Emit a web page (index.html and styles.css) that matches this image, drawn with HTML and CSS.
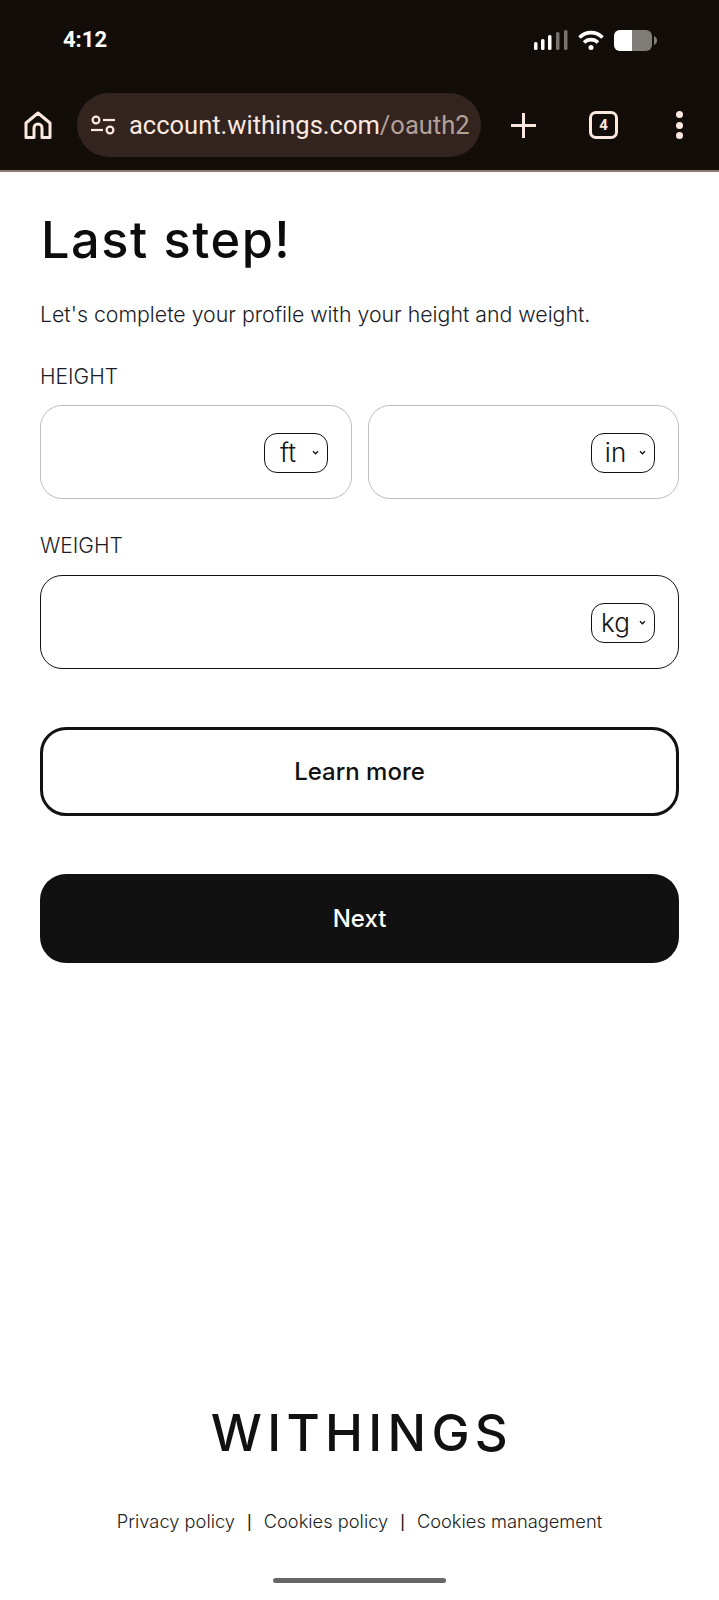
FILE: index.html
```html
<!DOCTYPE html>
<html lang="en">
<head>
  <meta charset="UTF-8" />
  <meta name="viewport" content="width=device-width, initial-scale=1.0"/>
  <title>Last step!</title>
  <link rel="stylesheet" href="styles.css">
</head>
<body>
  <header class="browser">
    <div class="status-bar">
      <span class="clock">4:12</span>
      <div class="status-icons">
        <svg class="signal" width="34" height="20" viewBox="0 0 34 20">
          <rect x="0" y="12" width="3.500" height="8" rx="1.500" fill="#fff"/>
          <rect x="7" y="9" width="3.500" height="11" rx="1.500" fill="#fff"/>
          <rect x="14" y="5" width="3.500" height="15" rx="1.500" fill="#fff"/>
          <rect x="22" y="2" width="3.500" height="18" rx="1.500" fill="#77736f"/>
          <rect x="30" y="0" width="3.500" height="20" rx="1.500" fill="#77736f"/>
        </svg>
        <svg class="wifi" width="26" height="20" viewBox="0 0 26 20" fill="none" stroke="#fff" stroke-width="3.600">
          <path d="M1.500 7.500C8 1 18 1 24.500 7.500"/>
          <path d="M6 12.500C10 8.700 16 8.700 20 12.500"/>
          <circle cx="13" cy="17.500" r="2.500" fill="#fff" stroke="none"/>
        </svg>
        <svg class="battery" width="43" height="22" viewBox="0 0 43 22">
          <rect x="0" y="0" width="38" height="21" rx="6" fill="#807c78"/>
          <path d="M6 0h12v21H6a6 6 0 0 1-6-6V6a6 6 0 0 1 6-6z" fill="#fff"/>
          <path d="M40 6c2 .5 3 2.500 3 4.500s-1 4-3 4.500z" fill="#807c78"/>
        </svg>
      </div>
    </div>

    <div class="toolbar">
      <svg class="home-icon" width="28" height="28" viewBox="0 0 28 28" fill="none" stroke="#fde8df" stroke-width="3" stroke-linejoin="round">
        <path d="M2 12L14 2l12 10v14.500h-8V17a4 4 0 0 0-8 0v9.500H2z"/>
      </svg>
      <div class="url-bar">
        <svg width="24" height="20" viewBox="0 0 24 20" fill="none" stroke="#fde8df" stroke-width="2.200">
          <circle cx="5" cy="5" r="3.400"/>
          <path d="M12 5h12"/>
          <path d="M0 15h12"/>
          <circle cx="19" cy="15" r="3.400"/>
        </svg>
        <span class="url">account.withings.com<span class="url-path">/oauth2</span></span>
      </div>
      <svg class="plus-icon" width="27" height="27" viewBox="0 0 27 27" stroke="#fde8df" stroke-width="3">
        <path d="M13.500 1v25M1 13.500h25"/>
      </svg>
      <div class="tab-count">4</div>
      <div class="menu-dots"><i></i><i></i><i></i></div>
    </div>
  </header>

  <main class="page">
    <h1>Last step!</h1>
    <p class="intro">Let's complete your profile with your height and weight.</p>

    <label class="field-label">HEIGHT</label>
    <div class="field-row">
      <div class="field">
        <div class="unit"><span class="unit-text">ft</span><svg class="chevron" width="7" height="5" viewBox="0 0 8 6"><path d="M1 1.500l3 3 3-3" fill="none" stroke="#111" stroke-width="1.500"/></svg></div>
      </div>
      <div class="field">
        <div class="unit"><span class="unit-text">in</span><svg class="chevron" width="7" height="5" viewBox="0 0 8 6"><path d="M1 1.500l3 3 3-3" fill="none" stroke="#111" stroke-width="1.500"/></svg></div>
      </div>
    </div>

    <label class="field-label weight-label">WEIGHT</label>
    <div class="field-row">
      <div class="field active">
        <div class="unit"><span class="unit-text">kg</span><svg class="chevron" width="7" height="5" viewBox="0 0 8 6"><path d="M1 1.500l3 3 3-3" fill="none" stroke="#111" stroke-width="1.500"/></svg></div>
      </div>
    </div>

    <button class="btn btn-outline">Learn more</button>
    <button class="btn btn-dark">Next</button>
  </main>

  <footer class="footer">
    <div class="logo">WITHINGS</div>
    <nav class="links">
      <a>Privacy policy</a><span class="sep">|</span><a>Cookies policy</a><span class="sep">|</span><a>Cookies management</a>
    </nav>
    <div class="home-bar"></div>
  </footer>
</body>
</html>
```

FILE: styles.css
```css
* {
  box-sizing: border-box;
}

body {
  margin: 0;
  height: 1600px;
  display: flex;
  flex-direction: column;
  background: #fff;
  color: #111;
  font-family: 'Inter', 'Liberation Sans', sans-serif;
  overflow: hidden;
}

/* browser chrome */
.browser {
  height: 172px;
  background: #130d09;
  border-bottom: 2px solid #8a7a70;
}

.status-bar {
  height: 93px;
  display: flex;
  justify-content: space-between;
  padding: 26px 62px 0 63px;
}

.clock {
  color: #fff;
  font-family: 'Roboto', sans-serif;
  font-weight: 700;
  font-size: 22px;
  line-height: 28px;
}

.status-icons {
  display: flex;
  align-items: flex-start;
  gap: 10px;
  padding-top: 4px;
}

.toolbar {
  display: flex;
  align-items: center;
  height: 64px;
  padding-left: 24px;
}

.url-bar {
  width: 404px;
  height: 64px;
  margin-left: 25px;
  padding-left: 14px;
  display: flex;
  align-items: center;
  gap: 14px;
  border-radius: 32px;
  background: #33241f;
}

.url {
  color: #fde8df;
  font-family: 'Roboto', sans-serif;
  font-size: 25.500px;
  white-space: nowrap;
}

.url-path {
  color: #b3a199;
}

.plus-icon {
  margin-left: 29px;
}

.tab-count {
  width: 29px;
  height: 28px;
  margin-left: 52px;
  border: 3px solid #fde8df;
  border-radius: 7px;
  color: #fde8df;
  font-family: 'Roboto', sans-serif;
  font-weight: 700;
  font-size: 15px;
  line-height: 22px;
  text-align: center;
}

.menu-dots {
  display: flex;
  flex-direction: column;
  gap: 3.500px;
  margin-left: 58px;
}

.menu-dots i {
  width: 7px;
  height: 7px;
  border-radius: 50%;
  background: #fde8df;
}

/* form */
.page {
  padding: 0 40px;
}

h1 {
  margin: 40px 0 0 1px;
  font-weight: 500;
  font-size: 50.500px;
  line-height: 56px;
  letter-spacing: 1.500px;
  color: #0c0c0c;
}

.intro {
  margin: 31px 0 0;
  font-weight: 300;
  font-size: 21.300px;
  line-height: 30px;
  color: #1c1c28;
}

.field-label {
  display: block;
  margin-top: 36px;
  font-weight: 300;
  font-size: 21px;
  line-height: 24px;
  color: #1c1c28;
}

.weight-label {
  margin-top: 35px;
}

.field-row {
  display: flex;
  gap: 16px;
  margin-top: 16px;
}

.weight-label + .field-row {
  margin-top: 17px;
}

.field {
  flex: 1;
  height: 94px;
  padding-top: 1px;
  padding-right: 23px;
  display: flex;
  align-items: center;
  justify-content: flex-end;
  border: 1.500px solid #bdbdc5;
  border-radius: 22px;
}

.field.active {
  border-color: #111;
}

.unit {
  width: 64px;
  height: 40px;
  display: flex;
  align-items: center;
  border: 1.500px solid #111;
  border-radius: 13px;
  font-weight: 300;
  font-size: 26px;
}

.unit-text {
  width: 47px;
  text-align: center;
}

.chevron {
  flex: none;
}

.btn {
  display: block;
  width: 100%;
  height: 89px;
  border-radius: 26px;
  font-family: 'Inter', sans-serif;
  font-weight: 500;
  font-size: 24px;
}

.btn-outline {
  margin-top: 58px;
  background: #fff;
  border: 3px solid #111;
  color: #111;
}

.btn-dark {
  margin-top: 58px;
  background: #111;
  border: none;
  color: #fff;
}

/* footer */
.footer {
  margin-top: auto;
  display: flex;
  flex-direction: column;
  align-items: center;
  padding-bottom: 17px;
}

.logo {
  padding-left: 5px;
  font-weight: 550;
  font-size: 51px;
  line-height: 54px;
  letter-spacing: 5.300px;
  color: #111;
}

.links {
  display: flex;
  gap: 12px;
  margin-top: 49px;
  font-weight: 300;
  font-size: 18.300px;
  line-height: 24px;
  color: #222;
}

.sep {
  font-family: 'Liberation Sans', sans-serif;
  font-weight: 400;
  font-size: 18px;
}

.home-bar {
  width: 173px;
  height: 5px;
  margin-top: 45px;
  border-radius: 3px;
  background: #666;
}
```
